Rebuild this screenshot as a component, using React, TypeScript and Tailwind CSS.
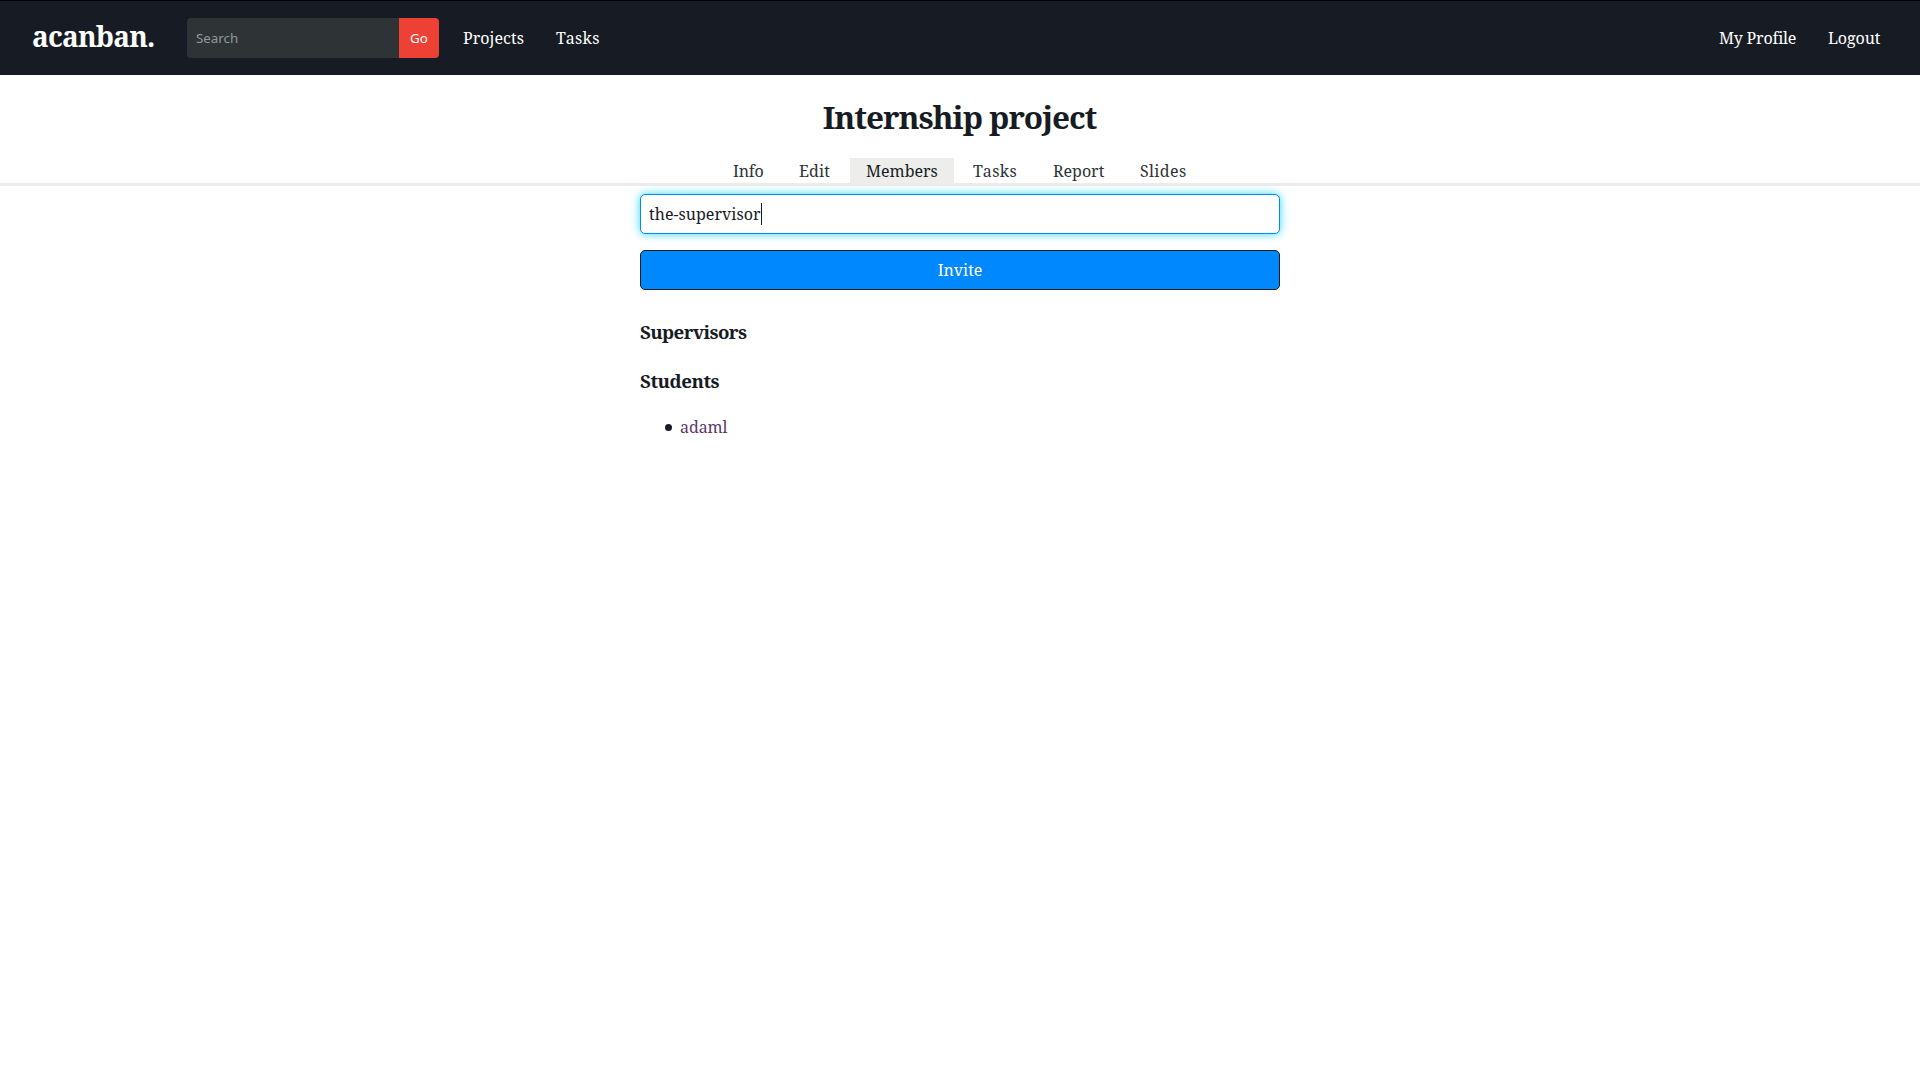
type Item = { label: string; style: string };

const navLinks: Item[] = [
  { label: "Projects", style: "w-[61px] tracking-[0.06px]" },
  { label: "Tasks", style: "w-[44px] tracking-[0.35px]" },
];

const accountLinks: Item[] = [
  { label: "My Profile", style: "w-[77px] tracking-[-0.2px]" },
  { label: "Logout", style: "w-[52px] tracking-[-0.1px]" },
];

const tabs: Item[] = [
  { label: "Info", style: "w-[62px] tracking-[-0.2px]" },
  { label: "Edit", style: "w-[63px] tracking-[0.1px]" },
  { label: "Members", style: "w-[104px] bg-[#ededeb] text-[#171c24]" },
  { label: "Tasks", style: "-ml-px w-[76px] tracking-[0.4px]" },
  { label: "Report", style: "w-[83px]" },
  { label: "Slides", style: "w-[78px] tracking-[0.35px]" },
];

function Header() {
  return (
    <header className="flex h-[75px] items-center border-t border-black bg-[#171c24] pl-8 pr-10 text-white">
      <a className="-mt-1 w-[155px] text-[28px] leading-[38px] font-bold tracking-[-0.8px]">acanban.</a>
      <form className="flex h-10 w-[252px] overflow-hidden rounded font-['Noto_Sans',sans-serif] text-[13.333px]">
        <input
          className="w-[212px] bg-[#2e3436] px-[9px] placeholder:text-[#959899]"
          placeholder="Search"
        />
        <button type="button" className="w-10 bg-[#ed4135]">Go</button>
      </form>
      <nav className="ml-6 flex gap-8">
        {navLinks.map((l) => (
          <a key={l.label} className={`whitespace-nowrap ${l.style}`}>{l.label}</a>
        ))}
      </nav>
      <nav className="ml-auto flex gap-8">
        {accountLinks.map((l) => (
          <a key={l.label} className={`whitespace-nowrap ${l.style}`}>{l.label}</a>
        ))}
      </nav>
    </header>
  );
}

export default function App() {
  return (
    <div className="min-h-screen bg-white font-['Noto_Serif',serif] text-base leading-6 text-[#171c24]">
      <Header />
      <h1 className="flex h-[83px] items-center justify-center pr-px text-[31.5px] font-bold tracking-[-1.02px]">
        Internship project
      </h1>
      <nav className="flex h-7 justify-center gap-1 border-b-3 border-[#ededeb] pr-px text-[#2e3436]">
        {tabs.map((t) => (
          <a key={t.label} className={`h-[25px] pt-px pl-4 whitespace-nowrap ${t.style}`}>{t.label}</a>
        ))}
      </nav>
      <main className="mx-auto w-[640px] pt-2">
        <div className="flex h-10 items-center rounded-[5px] border border-[#0088ff] bg-white pl-2 shadow-[0_0_10px_#34d8f0]">
          <span className="w-[112px] whitespace-nowrap tracking-[0.05px]">the-supervisor</span>
          <span className="h-[22px] w-px bg-[#171c24]" />
        </div>
        <button className="mt-4 flex h-10 w-full items-center justify-center rounded-[5px] border border-[#171c24] bg-[#0088ff] tracking-[-0.05px] text-white">
          Invite
        </button>
        <h3 className="mt-[29px] text-[18.72px] leading-[25px] font-bold tracking-[-0.6px]">Supervisors</h3>
        <h3 className="mt-6 text-[18.72px] leading-[25px] font-bold tracking-[-0.45px]">Students</h3>
        <ul className="mt-[22px]">
          <li className="flex items-center pl-[25px]">
            <span className="mt-px mr-2 size-[7px] rounded-full bg-[#171c24]" />
            <a className="tracking-[-0.1px] text-[#5c3566]">adaml</a>
          </li>
        </ul>
      </main>
    </div>
  );
}
